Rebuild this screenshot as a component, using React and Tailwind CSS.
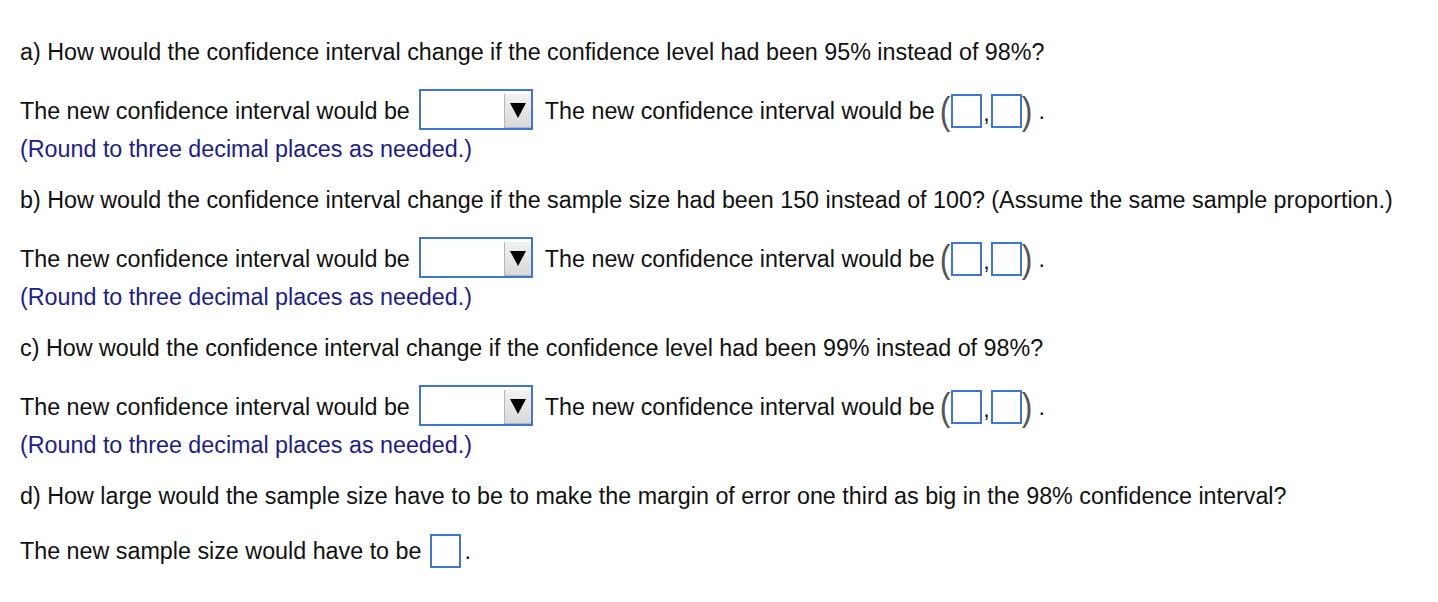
import React from "react";

// Blue answer box
const AnswerBox = ({ className = "" }) => (
  <span className={`inline-block w-[31px] h-[34px] border-2 border-[#3f75d4] bg-white ${className}`} />
);

// Dropdown with grey arrow button
const Dropdown = () => (
  <span className="inline-flex items-stretch w-[114px] h-[41px] border-2 border-[#3f75d4] bg-white">
    <span className="flex-1" />
    <span className="w-[27px] mt-[3px] flex items-center justify-center bg-gradient-to-b from-[#f2f2f2] to-[#d9d9d9] border-l border-b border-[#b5b5b5]">
      <svg width="16" height="16" viewBox="0 0 16 16">
        <polygon points="0,1 16,1 8,16" fill="#000" />
      </svg>
    </span>
  </span>
);

const Paren = ({ children }) => (
  <span className="inline-block text-[32px] leading-none text-[#555] scale-y-[1.2]">{children}</span>
);

const IntervalRow = () => (
  <div className="flex items-center h-[42px]">
    <span>The new confidence interval would be</span>
    <span className="ml-[9px]"><Dropdown /></span>
    <span className="ml-[12px]">The new confidence interval would be</span>
    <span className="ml-[5px] flex items-center">
      <Paren>(</Paren>
      <AnswerBox className="ml-[1px]" />
      <span className="mx-[1px] self-end mb-[1px]">,</span>
      <AnswerBox />
      <Paren>)</Paren>
      <span className="ml-[6px]">.</span>
    </span>
  </div>
);

const Note = () => (
  <p className="text-[#1c1c8c] mt-[4px]">(Round to three decimal places as needed.)</p>
);

const Part = ({ question, first }) => (
  <div className={first ? "" : "mt-[24px]"}>
    <p>{question}</p>
    <div className="mt-[24px]">
      <IntervalRow />
    </div>
    <Note />
  </div>
);

export default function App() {
  const parts = [
    "a) How would the confidence interval change if the confidence level had been 95% instead of 98%?",
    "b) How would the confidence interval change if the sample size had been 150 instead of 100? (Assume the same sample proportion.)",
    "c) How would the confidence interval change if the confidence level had been 99% instead of 98%?",
  ];

  return (
    <div className="w-[1438px] h-[602px] bg-white px-[20px] pt-[39px] text-[23.3px] leading-[27px] text-[#111] font-['Liberation_Sans',Arial,sans-serif] overflow-hidden">
      {parts.map((q, i) => (
        <Part key={q} question={q} first={i === 0} />
      ))}
      <p className="mt-[24px]">
        d) How large would the sample size have to be to make the margin of error one third as big in the 98% confidence interval?
      </p>
      <div className="mt-[24px] flex items-center h-[34px]">
        <span>The new sample size would have to be</span>
        <AnswerBox className="ml-[9px] w-[30px] h-[33px]" />
        <span className="ml-[3px]">.</span>
      </div>
    </div>
  );
}
